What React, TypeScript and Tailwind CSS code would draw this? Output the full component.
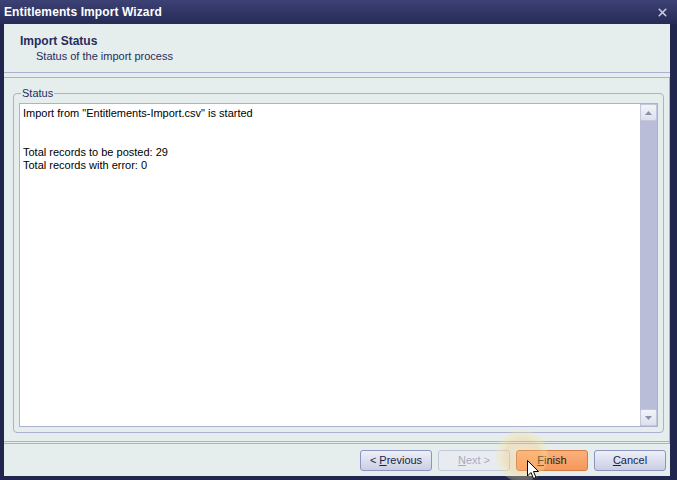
import { X } from "lucide-react";

const font = { fontFamily: '"Liberation Sans", Arial, sans-serif' };

function WizButton({
  children,
  variant = "normal",
}: {
  children: React.ReactNode;
  variant?: "normal" | "disabled" | "primary";
}) {
  const styles = {
    normal:
      "border-[#8e94c0] bg-gradient-to-b from-[#eef0f8] to-[#c9cee4] text-[#1a1f45]",
    disabled: "border-[#c3c7dc] bg-[#e8ecf1] text-[#a7abc2]",
    primary:
      "border-[#d07a45] bg-gradient-to-b from-[#fbb07c] to-[#f7965a] text-[#2a1c10]",
  }[variant];
  return (
    <button
      className={`w-[72px] h-[21px] rounded-[3px] border text-[11px] leading-none flex items-center justify-center ${styles}`}
    >
      {children}
    </button>
  );
}

function ScrollButton({ up }: { up?: boolean }) {
  return (
    <div className="h-[17px] w-[17px] rounded-[2px] border border-[#c4c8dc] bg-gradient-to-b from-[#f2f4f8] to-[#dde1ec] flex items-center justify-center">
      <svg width="7" height="4" viewBox="0 0 7 4">
        {up ? (
          <path d="M0 4 L3.5 0 L7 4 Z" fill="#8a8fb0" />
        ) : (
          <path d="M0 0 L3.5 4 L7 0 Z" fill="#8a8fb0" />
        )}
      </svg>
    </div>
  );
}

export default function App() {
  return (
    <div
      className="relative w-[677px] h-[480px] bg-[#21264f] flex flex-col overflow-hidden"
      style={font}
    >
      {/* Title bar */}
      <div className="h-[24px] flex items-center justify-between pl-[4px] pr-[8px] bg-gradient-to-b from-[#3d4275] to-[#252a56]">
        <span className="text-white font-bold text-[12px] tracking-[0.1px]">
          Entitlements Import Wizard
        </span>
        <X className="size-[13px] text-[#c8cbe0]" strokeWidth={3} />
      </div>

      {/* Body */}
      <div className="flex-1 ml-[4px] mr-[7px] mb-[4px] bg-[#e6eeed] flex flex-col">
        {/* Header */}
        <div className="h-[49px] border-b border-[#aeb0d2] pl-[16px] pt-[10px] text-[#262c5c]">
          <div className="text-[12px] font-bold leading-[14px]">Import Status</div>
          <div className="text-[11px] leading-[14px] pl-[16px] mt-[1px]">
            Status of the import process
          </div>
        </div>

        {/* Content panel */}
        <div className="mt-[4px] h-[367px] border-t border-r border-b-[3px] border-double border-[#aeb0d2] pl-[9px] pr-[5px] pt-[15px] pb-[8px] flex flex-col">
          <div className="relative flex-1 rounded-[4px] border border-[#aeb0d2] pt-[9px] px-[5px] pb-[5px] flex flex-col">
            <span className="absolute -top-[8px] left-[7px] bg-[#e6eeed] px-[1px] text-[11px] leading-[14px] text-[#262c5c]">
              Status
            </span>
            <div className="flex-1 bg-white border border-[#aeb0d2] flex">
              <div className="flex-1 px-[3px] pt-[3px] text-[11px] leading-[13px] text-black">
                <div>Import from "Entitlements-Import.csv" is started</div>
                <div className="h-[13px]" />
                <div className="h-[13px]" />
                <div>Total records to be posted: 29</div>
                <div>Total records with error: 0</div>
              </div>
              <div className="w-[17px] bg-[#b9bdd7] flex flex-col justify-between">
                <ScrollButton up />
                <ScrollButton />
              </div>
            </div>
          </div>
        </div>

        {/* Footer */}
        <div className="flex-1 flex justify-end items-start gap-[6px] pt-[6px] pr-[4px]">
          <WizButton>
            &lt; <span className="underline ml-[3px]">P</span>revious
          </WizButton>
          <WizButton variant="disabled">
            <span className="underline">N</span>ext &gt;
          </WizButton>
          <WizButton variant="primary">
            <span className="underline">F</span>inish
          </WizButton>
          <WizButton>
            <span className="underline">C</span>ancel
          </WizButton>
        </div>
      </div>

      {/* Click highlight and cursor */}
      <div className="pointer-events-none absolute left-[496px] top-[430px] w-[52px] h-[52px] rounded-full bg-[radial-gradient(circle,rgba(250,200,120,0.25)_0%,rgba(250,200,120,0.35)_45%,rgba(240,230,160,0.35)_60%,rgba(240,230,160,0)_100%)]" />
      <svg
        className="absolute left-[527px] top-[460px]"
        width="14"
        height="21"
        viewBox="0 0 14 21"
      >
        <path
          d="M0.5 0.5 L0.5 16 L4 12.5 L6.5 18.5 L9 17.5 L6.5 11.5 L11.5 11.5 Z"
          fill="white"
          stroke="black"
          strokeWidth="1"
        />
      </svg>
    </div>
  );
}
